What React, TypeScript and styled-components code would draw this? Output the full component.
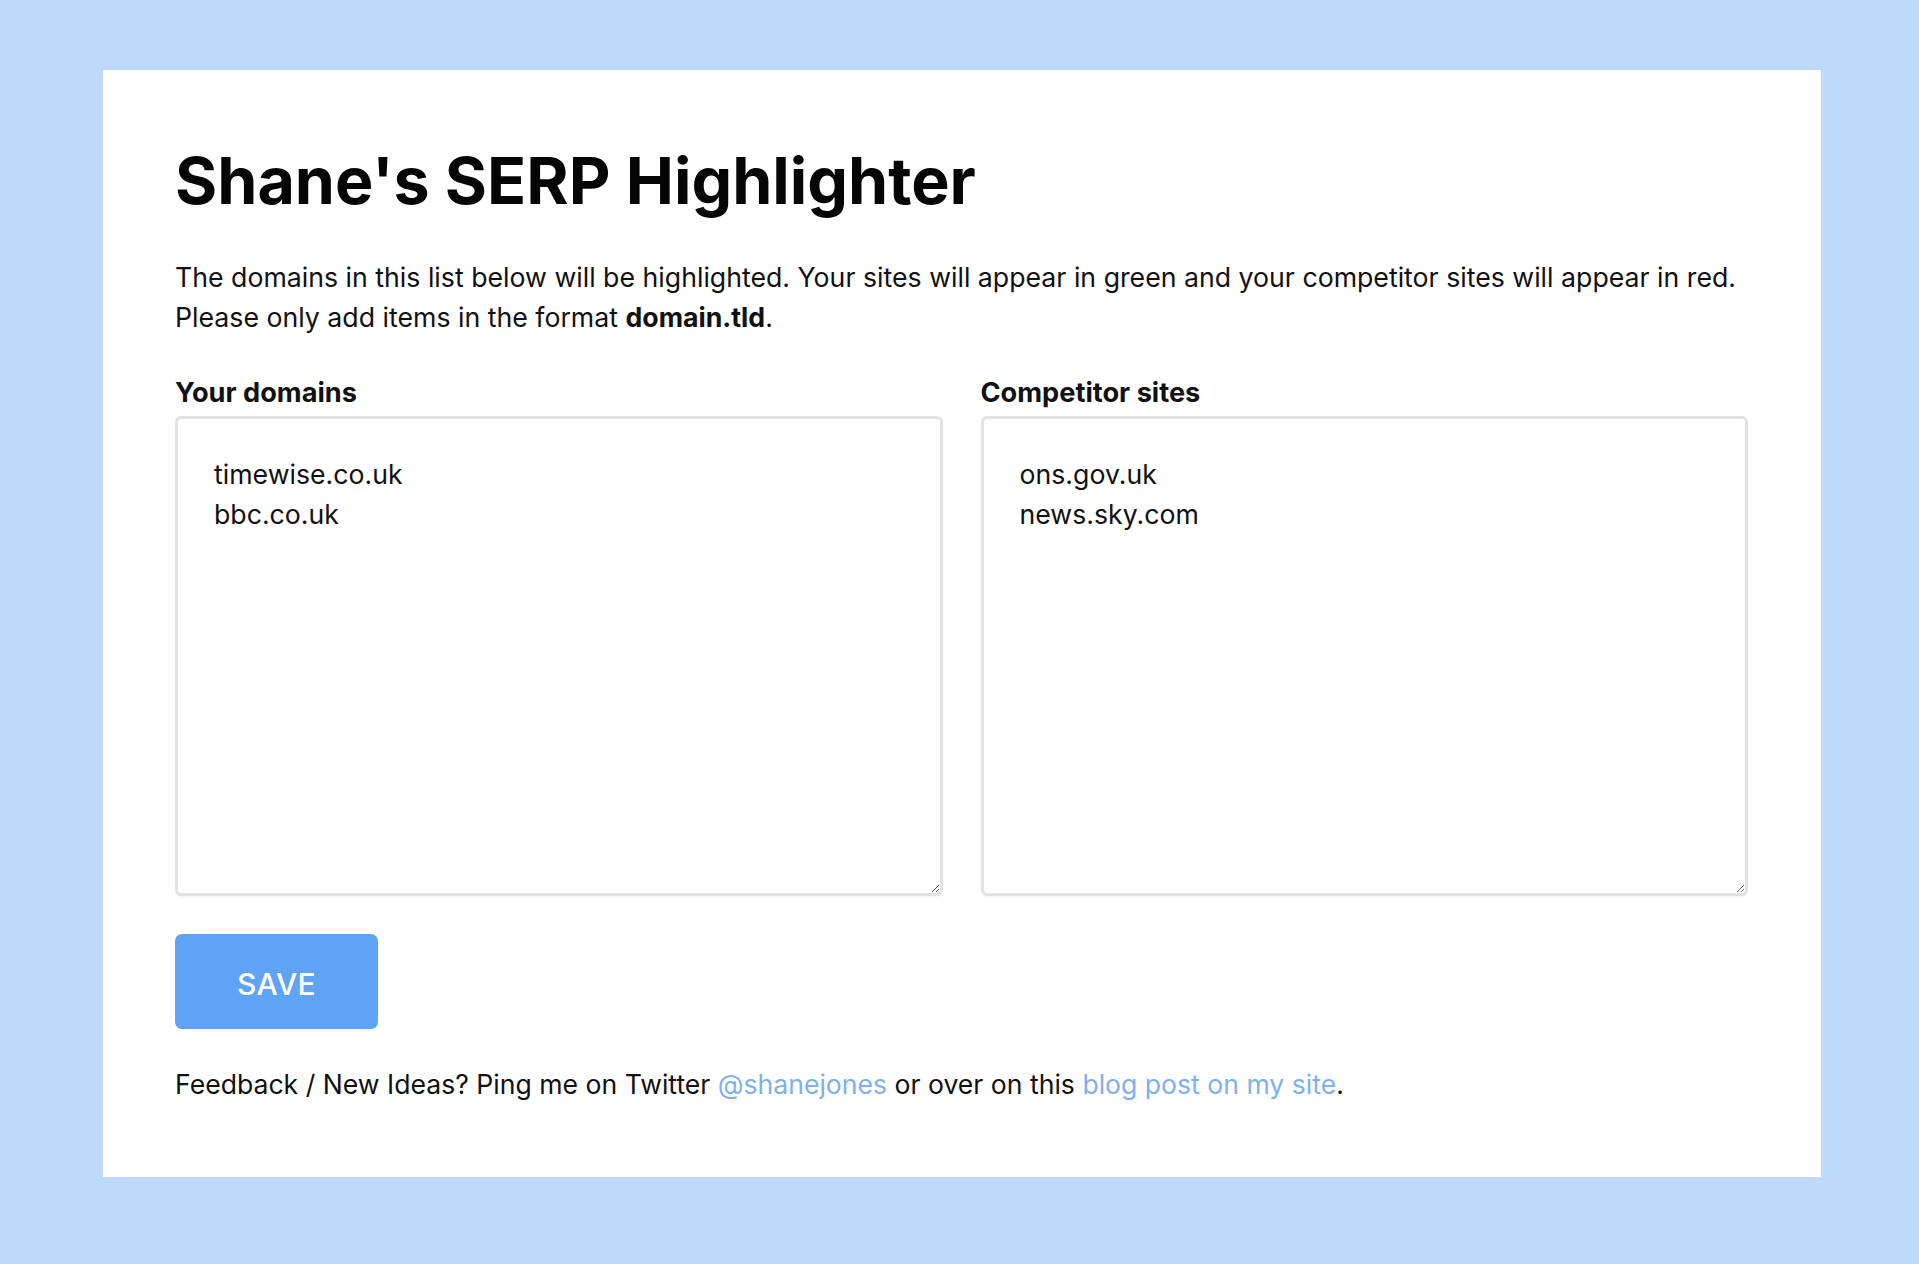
import styled, { createGlobalStyle } from 'styled-components';

const GlobalStyle = createGlobalStyle`
  html, body {
    margin: 0;
    background: #bfd9fb;
  }
  body {
    font-family: Inter, "Noto Sans", sans-serif;
    color: #111111;
  }
`;

const Page = styled.div`
  display: flex;
  padding: 70px 98px 87px 103px;
`;

const Card = styled.main`
  flex: 1;
  background: #ffffff;
  padding: 73px 73px 73px 72px;
`;

const Title = styled.h1`
  margin: 0;
  font-size: 64.5px;
  line-height: 77px;
  font-weight: 700;
  color: #050505;
`;

const Intro = styled.p`
  margin: 37px 0 0;
  font-size: 26.7px;
  line-height: 40px;
`;

const Columns = styled.div`
  display: grid;
  grid-template-columns: 1fr 1fr;
  column-gap: 38px;
  margin-top: 36px;
`;

const Field = styled.label`
  display: flex;
  flex-direction: column;
`;

const FieldLabel = styled.span`
  font-size: 27.2px;
  line-height: 40px;
  font-weight: 700;
  margin-bottom: 3px;
`;

const DomainList = styled.textarea`
  box-sizing: border-box;
  height: 480px;
  padding: 35px 36px;
  border: 3px solid #e2e2e2;
  border-radius: 6px;
  box-shadow: 0 1px 1px rgba(0, 0, 0, 0.04);
  font-family: Inter, "Noto Sans", sans-serif;
  font-size: 26.7px;
  line-height: 40px;
  color: #111111;
  outline: none;
`;

const SaveButton = styled.button`
  display: block;
  margin-top: 38px;
  width: 203px;
  height: 95px;
  padding: 5px 0 0;
  border: none;
  border-radius: 7px;
  background: #5fa3f7;
  color: #ffffff;
  font-family: Inter, "Noto Sans", sans-serif;
  font-size: 30px;
  font-weight: 500;
  text-transform: uppercase;
  letter-spacing: 0.3px;
  cursor: pointer;
`;

const Footer = styled.p`
  margin: 35px 0 0;
  font-size: 26.6px;
  line-height: 40px;
`;

const Link = styled.a`
  color: #7fb0ec;
  text-decoration: none;
`;

const App = () => (
  <>
    <GlobalStyle />
    <Page>
      <Card>
        <Title>Shane's SERP Highlighter</Title>
        <Intro>
          The domains in this list below will be highlighted. Your sites will appear in green and your
          competitor sites will appear in red.
          <br />
          Please only add items in the format <strong>domain.tld</strong>.
        </Intro>
        <Columns>
          <Field>
            <FieldLabel>Your domains</FieldLabel>
            <DomainList defaultValue={'timewise.co.uk\nbbc.co.uk'} />
          </Field>
          <Field>
            <FieldLabel>Competitor sites</FieldLabel>
            <DomainList defaultValue={'ons.gov.uk\nnews.sky.com'} />
          </Field>
        </Columns>
        <SaveButton type="button">Save</SaveButton>
        <Footer>
          Feedback / New Ideas? Ping me on Twitter <Link href="#">@shanejones</Link> or over on this{' '}
          <Link href="#">blog post on my site</Link>.
        </Footer>
      </Card>
    </Page>
  </>
);

export default App;
